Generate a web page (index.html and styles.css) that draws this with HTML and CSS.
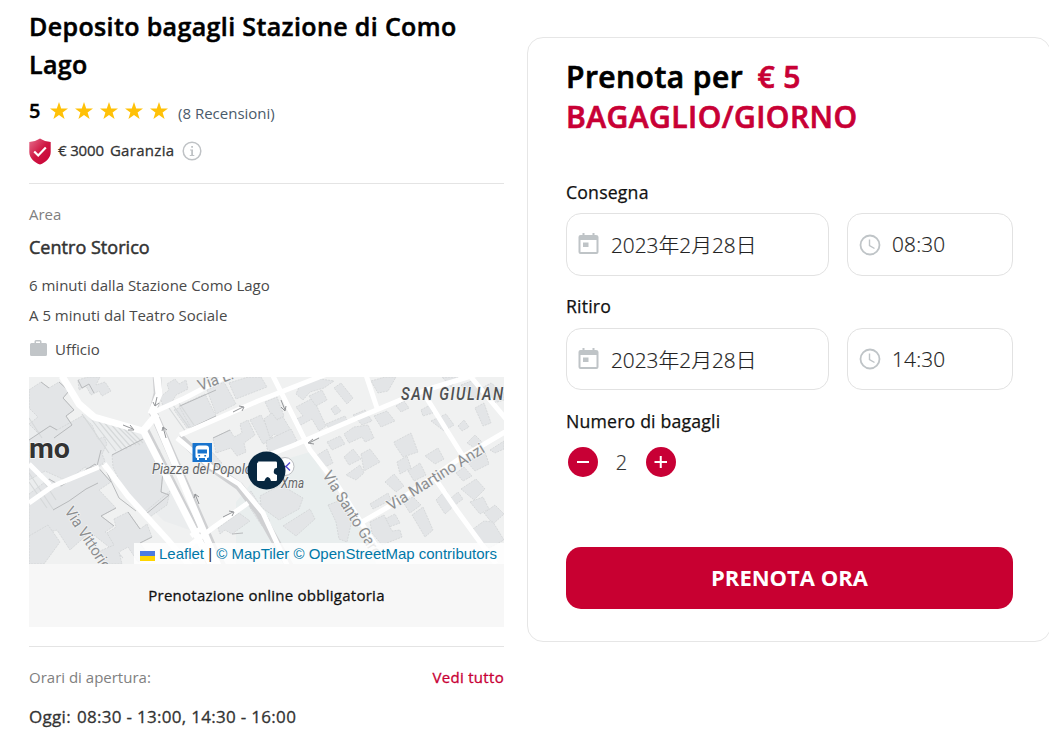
FILE: index.html
```
<!DOCTYPE html>
<html lang="it">
<head>
<meta charset="utf-8">
<title>Deposito bagagli Stazione di Como Lago</title>
<link rel="stylesheet" href="styles.css">
</head>
<body>
<svg class="defs" width="0" height="0" aria-hidden="true">
  <symbol id="star" viewBox="0 0 18 18"><path d="M9 0l2.200 6.400H18l-5.400 4.100 2 6.500L9 13.100 3.400 17l2-6.500L0 6.400h6.800z"/></symbol>
  <symbol id="calendar" viewBox="0 0 20 22"><path fill-rule="evenodd" d="M4 0h2v2h8V0h2v2h1.500A2.500 2 0 0 1 20 4v15a2 2 0 0 1-2 2H2a2 2 0 0 1-2-2V4a2 2 0 0 1 2-2h2zM2 7v12h16V7z"/><path d="M4.500 9.500H10V14H4.500z"/></symbol>
  <symbol id="clock" viewBox="0 0 22 22"><circle cx="11" cy="11" r="9.500" fill="none" stroke="currentColor" stroke-width="1.800"/><path d="M10.500 5.500v6l5 3" fill="none" stroke="currentColor" stroke-width="1.400"/></symbol>
</svg>
<main class="page">
  <section class="info">
    <h1 class="title">Deposito bagagli Stazione di Como Lago</h1>
    <div class="rating">
      <strong class="score">5</strong>
      <span class="stars">
        <svg><use href="#star"/></svg><svg><use href="#star"/></svg><svg><use href="#star"/></svg><svg><use href="#star"/></svg><svg><use href="#star"/></svg>
      </span>
      <span class="reviews">(8 Recensioni)</span>
    </div>
    <div class="guarantee">
      <svg class="shield" viewBox="0 0 22 27">
        <defs><linearGradient id="sg" x1="0" y1="0" x2="1" y2="1"><stop offset="0" stop-color="#e56d8c"/><stop offset=".5" stop-color="#cf1743"/><stop offset="1" stop-color="#c80035"/></linearGradient></defs>
        <path d="M11 .5C14 2.500 18 3.700 21.700 4v10c0 6-5 10.500-10.700 12.500C5.300 24.500.3 20 .3 14V4C4 3.700 8 2.500 11 .5z" fill="url(#sg)"/>
        <path d="M5.200 13.500l4 4 7.600-8" fill="none" stroke="#fff" stroke-width="2.200"/>
      </svg>
      <span class="amount">€ 3000</span>
      <span class="g-label">Garanzia</span>
      <svg class="i-icon" viewBox="0 0 20 20"><circle cx="10" cy="10" r="8.800" fill="none" stroke="#bfc2c5" stroke-width="1.500"/><path d="M9.200 5h1.800v1.800H9.200zM8 8.500h3V14h1.300v1H7.800v-1h1.400V9.500H8z" fill="#bfc2c5"/></svg>
    </div>
    <div class="area">
      <div class="muted">Area</div>
      <div class="area-name">Centro Storico</div>
      <div class="line">6 minuti dalla Stazione Como Lago</div>
      <div class="line">A 5 minuti dal Teatro Sociale</div>
      <div class="kind"><svg viewBox="0 0 18 17"><path fill-rule="evenodd" d="M5 3V1.500A1.500 1.500 0 0 1 6.500 0h4A1.500 1.500 0 0 1 12 1.500V3h4a1.500 1.500 0 0 1 1.500 1.500v10A1.500 1.500 0 0 1 16 16H2A1.500 1.500 0 0 1 .5 14.500v-10A1.500 1.500 0 0 1 2 3zM6.500 1.500V3h4V1.500z" fill="#c1c5c8"/></svg><span>Ufficio</span></div>
    </div>
    <div class="map">
      <svg class="map-art" viewBox="29 377 475 187">
        <rect x="29" y="377" width="475" height="187" fill="#f0f1f1"/>
        <path class="park" d="M236 502l30-37 44-13 28 45 30 42 8 25H236z"/>
        <path class="pave" d="M29 408l30 27 27-22 64 20 48 100-34-12-58-56-80 33z"/>
        <g class="bld">
          <path d="M29 390l12-8 8 6 10-6 10 9-6 7 11 12-8 6 6 9-18 13-4-5-7 5-14-14 9-7-9-9z"/>
          <path d="M29 440l21-14 7 4 25-14 10 9 6 14 6-2 3 7-5 10 3 7-11 10-9-4-18 14-22-10-16 9z"/>
          <path d="M112 455l31-16 17 11-6 13 9 8-2 21 8 3-23 19-17-13-16-34z"/>
          <path d="M146 511l24-20-3 14-20 14z"/>
          <path d="M29 494l20-15 12 7 34-22 16 18-12 8 17 18-15 8 13 10-9 6 21 7-10 10 7 9-33-26-20 18-13-20-28 8z"/>
          <path d="M29 536l19-11 12 17-16 22H29z"/>
          <path d="M78 380l10-3h12l-4 8 9-3 6 9-9 5-3-5-8 4-5-9-7 4z"/>
          <path d="M114 519l14-7 12 17 7-5 5 13-12 6 9 13-11 6-10-15-9 5 3 12h-17l-5-13 14-6-7-12 9-6z"/>
          <path d="M160 397l9-7-2-6 8-5 4 5 7-4 2 9-12 6-5 9-8 2z"/>
          <path d="M174 410l17-8 10 21-14 5z"/>
          <path d="M179 406l26-12 11 22-25 12z"/>
          <path d="M207 390l17-8 12 22-20 10z"/>
          <path d="M229 383l19-6h13l6 10-31 12z"/>
          <path d="M213 438l17-8 4 7 8-4-2-9 8-4 7 15-11 8 2 9-9 4-6-8-15 5z"/>
          <path d="M250 420l11-5 12 24-10 5z"/><path d="M265 402l12-5 7 19-10 5z"/>
          <path d="M203 457l9-5 10 11-9 7z"/>
          <path d="M218 528l21-15 11 8-18 13-7-4-5 4z"/>
          <path d="M243 497l8-6 19 30-8 5z"/><path d="M260 496l21-11 22 13-4 11-20 11-18-13z"/>
          <path d="M283 526l27-17 5 10-19 17z"/><path d="M328 505l13-5 11 20-5 22-8-3-3-17z"/>
          <path d="M264 419l8-6 5 7 6-3 9 15-11 7-7-5-4 4z"/><path d="M266 441l25-12 6 12-21 13-9-5z"/>
          <path d="M294 420l9-4-7-9 17-9 13 28-7 5-7-12-11 6z"/><path d="M300 385l14-7 20 3-10 7-14 4-7 8-7-6z"/>
          <path d="M309 396l13-6 5 10-11 6z"/><path d="M331 409l5-4 5 6-6 4z"/><path d="M326 424l19-8 3 6-18 8z"/>
          <path d="M316 456l11-7 6 14-8 4z"/><path d="M327 442l13-6 5 8-13 6z"/><path d="M344 434l10-7 14-2 6 13-9 4-3-5-13 6z"/>
          <path d="M344 457l9-8 8 10-12 6z"/><path d="M361 454l9-5 10 13-16 9z"/><path d="M353 415l12-5 7 11-10 4z"/>
          <path d="M374 416l13-5 8 10-14 6z"/><path d="M394 442l17-9 7 19-15 5-8-12z"/>
          <path d="M397 462l10-6 4 12-11 6z"/><path d="M408 471l12-8 6 12-12 6z"/><path d="M425 456l13-8 6 11-9 5z"/>
          <path d="M421 410l9-5 3 8-10 3z"/><path d="M431 421l15-7 8 11-10 6z"/><path d="M458 426l6-6 5 7-7 4z"/>
          <path d="M467 443l8-8 8 8-7 6z"/><path d="M490 450l14-9v8l-9 4z"/><path d="M467 462l18-10 4 12-14 7z"/>
          <path d="M456 473l8-6 8 9-9 5z"/><path d="M461 489l15-10 9 10-11 11z"/><path d="M436 500l10-10 8 16-9 8z"/>
          <path d="M451 498l7-6 5 7-8 6z"/><path d="M470 502l13-5 6 12-9 5z"/><path d="M484 513l11-8 9 9-11 10z"/>
          <path d="M473 529l11-8 9 1 11 18-15 8-12-11z"/><path d="M423 507l10 23-8 7-13-22z"/>
          <path d="M385 519l10-5 5 9-11 4z"/><path d="M370 522l14-7 8 16 8-1 2 7-20 8-10-12z"/><path d="M403 502l10-5 8 8-11 8z"/>
          <path d="M385 482l9-8 10 12-8 6z"/><path d="M370 504l18-11 3 7-18 9z"/><path d="M346 475l14-10 4 8-8 7z"/>
          <path d="M334 388l7-5 12 15-6 6z"/><path d="M371 381l14-4h11l-8 14-10 2z"/><path d="M396 406l8-5 5 7-8 4z"/>
          <path d="M442 377h16l-7 10z"/><path d="M461 385l13-5 8 13-9 6z"/><path d="M475 408l9-5 7 20-8 3z"/><path d="M482 388l9-5 13 10v7l-10 3z"/>
        </g>
        <g class="hatch">
          <path d="M82 414l27 39M88 415l28 36M95 417l27 33M102 420l25 29M109 422l22 25M116 425l20 20M122 427l18 18M129 429l14 14M169 408l17 24M173 405l17 24M179 403l15 22"/>
          <path d="M29 473l24 36M29 482l18 26M36 470l20 30M29 418l13 20"/>
        </g>
        <g class="edge">
          <path d="M41 382l8 6M59 382l10 9-6 7 11 12-8 6 6 9-18 13M29 440l21-14 7 4M101 450l-4 16-11 3M112 455l31-16M136 511l-17-13-16-34M163 471l-2 21 8 3-23 19M95 464l16 18M49 479l12 7 34-22M116 508l-15 8 13 10M180 406l36-16M191 428l25-12M213 438l17-8M243 533l-11 1M128 512l12 17M152 537l-12 6M53 510l16-9 17-12 12-6M78 380l4 8 7-4 5 9"/>
        </g>
        <g class="case">
          <path d="M153 412L214 551l8 15M145 430l53 105 14 32M157 377l1 16-5 20M179 437l31 29 29 20 20 26 31 55"/>
        </g>
        <g class="road">
          <path class="w7" d="M62 376l17 28 15 13 49 14 14-17M157 376l2 18-8 20"/>
          <path class="w7" d="M153 412L219 568M143 430l55 108 14 28"/>
          <path class="w6" d="M104 464l24 32 39 43 24 28"/>
          <path d="M154 412l31-14 46-24M180 435l78-34 69-27M177 438l33 28 29 18 24 29 25 54"/>
          <path d="M176 556l38-29 34-24M191 536l13-10M272 374l38 76 28 36 38 60M255 460l37-14 63-27 50-21 27-10 46-14"/>
          <path d="M366 375l12 36M426 397l38 61M470 376l36 43M357 525l38-22 64-44 46-27M434 477l24 35 38 52M29 503l24-17 46-19M50 485l-21-21"/>
        </g>
        <g class="arrows">
          <path d="M123 425l10 4m-3-4l4 5-6 0M166 438l-3-11m-1 4l1-4 4 3M199 504l-4-10m-1 4l1-4 4 3M157 397l-2 9m-2-4l2 4 4-3M233 412l10-5m-4-1l5 1-2 4M223 517l10-5m-4-1l5 1-2 4M281 400l4 10m-4-3l4 4 1-5M319 438l-10 5m4-4l-5 4 6 1"/>
        </g>
        <g class="street">
          <text transform="translate(200 391) rotate(-20)" textLength="37" lengthAdjust="spacingAndGlyphs">Via L.</text>
          <text transform="translate(64 511) rotate(57)" textLength="72" lengthAdjust="spacingAndGlyphs">Via Vittorio</text>
          <text transform="translate(322 475) rotate(58)" textLength="98" lengthAdjust="spacingAndGlyphs">Via Santo Garo</text>
          <text transform="translate(391 511) rotate(-32)" textLength="112" lengthAdjust="spacingAndGlyphs">Via Martino Anzi</text>
        </g>
        <text class="city" x="29" y="458" textLength="41" lengthAdjust="spacingAndGlyphs">mo</text>
        <text class="district" transform="translate(401 400) scale(.82 1)">SAN GIULIAN</text>
        <text class="place" x="152" y="474" textLength="100" lengthAdjust="spacingAndGlyphs">Piazza del Popolo</text>
        <text class="place" x="281" y="488" textLength="23" lengthAdjust="spacingAndGlyphs">Xma</text>
        <g>
          <rect x="192.500" y="443" width="19.500" height="19" fill="#1873cd"/>
          <path fill="#fff" fill-rule="evenodd" d="M199 445.500h7q3 0 3 3v8q0 1.500-2 1.500v2h-2v-2h-6v2h-2v-2q-1.500 0-1.500-1.500v-8q0-3 3.500-3zm-1.500 4v4h9.500v-4zM198.300 455h1.800v1.500h-1.800zm6 0h1.800v1.500h-1.800z"/>
        </g>
        <circle cx="285" cy="466.500" r="9" fill="#fff" stroke="#bcbec2"/>
        <path d="M290 462.500l-4 4 4 4M283 466.500h3" stroke="#5147cf" stroke-width="1.400" fill="none"/>
        <circle cx="266.500" cy="470.500" r="19" fill="#072740"/>
        <path d="M258.200 461.500h17.600q1.200 0 1.200 1.200v5l-2.500 1q-1.500 3.800 0 5l2.500 1.300v5q0 1-1.200 1H271l-1-2.500q-2.500-3-4.500 0l-1.200 2.500h-6.100q-1.200 0-1.200-1.200v-16.100q0-1.200 1.200-1.200z" fill="#fff"/>
      </svg>
      <div class="credit"><svg class="flag" viewBox="0 0 15 10"><path fill="#4c7be1" d="M0 0h15v5H0z"/><path fill="#ffd500" d="M0 5h15v5H0z"/></svg><a>Leaflet</a> | <a>© MapTiler</a> <a>© OpenStreetMap contributors</a></div>
    </div>
    <div class="notice">Prenotazione online obbligatoria</div>
    <div class="hours">
      <div class="hours-head"><span class="muted">Orari di apertura:</span><a class="all">Vedi tutto</a></div>
      <div class="today"><span>Oggi:</span><span>08:30 - 13:00, 14:30 - 16:00</span></div>
    </div>
  </section>
  <section class="card">
    <h2 class="price"><span class="for">Prenota per</span> <span class="red">€ 5</span><br><span class="red">BAGAGLIO/GIORNO</span></h2>
    <div class="label">Consegna</div>
    <div class="fields first">
      <div class="field"><svg class="cal"><use href="#calendar"/></svg><span class="date">2023年2月28日</span></div>
      <div class="field"><svg class="clk"><use href="#clock"/></svg><span class="time">08:30</span></div>
    </div>
    <div class="label pickup">Ritiro</div>
    <div class="fields second">
      <div class="field"><svg class="cal"><use href="#calendar"/></svg><span class="date">2023年2月28日</span></div>
      <div class="field"><svg class="clk"><use href="#clock"/></svg><span class="time">14:30</span></div>
    </div>
    <div class="label">Numero di bagagli</div>
    <div class="stepper">
      <button class="round"><svg viewBox="0 0 30 30"><path d="M9 15h12"/></svg></button>
      <span class="count">2</span>
      <button class="round"><svg viewBox="0 0 30 30"><path d="M8.500 15h12.500M14.750 9v12"/></svg></button>
    </div>
    <button class="book">PRENOTA ORA</button>
  </section>
</main>
</body>
</html>
```
FILE: styles.css
```
* { box-sizing: border-box; }
body { margin: 0; width: 1049px; height: 746px; overflow: hidden; background: #fff; font-family: "Open Sans", "Noto Sans CJK JP", sans-serif; color: #333; }
button { border: 0; padding: 0; font-family: inherit; }
svg { display: block; }
.defs { position: absolute; }
.page { display: flex; align-items: flex-start; gap: 23px; padding-left: 29px; width: 1060px; }
.info { width: 475px; flex: none; }
.title { margin: 0; padding-top: 7px; height: 92px; font-size: 25px; line-height: 38px; font-weight: 600; color: #000; letter-spacing: .37px; -webkit-text-stroke: .5px; }
.rating { display: flex; align-items: center; height: 38px; }
.score { width: 21px; font-size: 20px; line-height: 26px; font-weight: 600; color: #000; -webkit-text-stroke: .3px; }
.stars { display: flex; gap: 7px; fill: #ffc107; }
.stars svg { width: 18px; height: 18px; }
.reviews { margin-left: 10px; padding-top: 4px; font-size: 15px; color: #4a5a6a; }
.guarantee { display: flex; align-items: center; height: 54px; padding-bottom: 11px; border-bottom: 1px solid #e4e4e4; font-size: 15px; line-height: 20px; -webkit-text-stroke: .3px; }
.guarantee span { padding-bottom: 2px; }
.shield { width: 22px; height: 27px; margin: 0 7px 0 0; }
.amount { letter-spacing: -.15px; }
.g-label { margin-left: 6px; letter-spacing: .3px; }
.i-icon { width: 20px; height: 20px; margin-left: 8px; -webkit-text-stroke: 0; }
.area { height: 193px; padding-top: 18px; }
.muted { font-size: 15px; line-height: 24px; color: #808080; }
.area-name { margin: 8px 0 10px; font-size: 18px; line-height: 26px; color: #333; letter-spacing: .03px; -webkit-text-stroke: .5px; }
.line { font-size: 15px; line-height: 30px; color: #4a4a4a; }
.kind { display: flex; align-items: center; gap: 7px; height: 37px; font-size: 15px; color: #4a4a4a; }
.kind svg { width: 19px; height: 17px; }
.map { position: relative; height: 187px; overflow: hidden; }
.map-art { width: 475px; height: 187px; }
.park { fill: #e9eeee; }
.pave { fill: #ebedee; }
.bld path { fill: #e3e5e7; stroke: #ced1d3; stroke-width: .7; stroke-dasharray: 2 1; }
.hatch { stroke: #d6d9da; stroke-width: 1.200; }
.edge { stroke: #b8babc; stroke-width: 1; fill: none; }
.case { fill: none; stroke: #cfd0d2; stroke-width: 8.500; }
.road { fill: none; stroke: #fff; stroke-width: 5; stroke-linejoin: round; }
.road .w7 { stroke-width: 7; }
.road .w6 { stroke-width: 6; }
.arrows { stroke: #939598; stroke-width: 1; fill: none; }
.street, .place, .district, .city { font-family: Roboto, sans-serif; paint-order: stroke; stroke: #f3f4f4; stroke-width: 1.500px; }
.street { font-size: 15.500px; fill: #8c8e90; }
.place { font-size: 15px; font-style: italic; fill: #636567; }
.district { font-size: 18px; font-style: italic; font-weight: 500; letter-spacing: 1.900px; fill: #4e5052; }
.city { font-size: 28px; font-weight: 700; fill: #333; }
.credit { position: absolute; right: 0; bottom: 0; width: 370px; height: 21px; padding-left: 6px; background: rgba(255,255,255,.82); font: 15px/21px "Liberation Sans", sans-serif; white-space: nowrap; color: #333; }
.credit a { color: #0078a8; }
.flag { display: inline-block; width: 15px; height: 10px; margin-right: 4px; vertical-align: -2px; }
.notice { height: 63px; background: #f7f7f7; text-align: center; font-size: 15px; line-height: 63px; letter-spacing: .26px; color: #111; -webkit-text-stroke: .3px; }
.hours { margin-top: 19px; border-top: 1px solid #e4e4e4; padding-top: 18px; }
.hours-head { display: flex; justify-content: space-between; }
.all { font-size: 15px; line-height: 24px; letter-spacing: .3px; color: #c80035; -webkit-text-stroke: .3px; }
.today { display: flex; gap: 6px; margin-top: 15px; font-size: 17px; line-height: 26px; letter-spacing: .3px; -webkit-text-stroke: .3px; }
.card { flex: none; width: 524px; height: 605px; margin-top: 37px; border: 1px solid #e6e6e6; border-radius: 16px; padding: 19px 37px 0 38px; }
.price { margin: 0; height: 122px; font-size: 30px; line-height: 40px; font-weight: 600; color: #000; letter-spacing: .47px; -webkit-text-stroke: .7px; }
.red { color: #c80035; }
.price .for { margin-right: 6px; }
.label { font-size: 17.700px; line-height: 26px; letter-spacing: .17px; color: #111; -webkit-text-stroke: .25px; }
.pickup { margin-top: -1px; }
.fields { display: grid; grid-template-columns: 263px 166px; gap: 18px; }
.first { height: 81px; margin-top: 8px; padding-bottom: 18px; }
.second { height: 80px; margin-top: 9px; padding-bottom: 18px; }
.field { display: flex; align-items: center; border: 1px solid #e2e2e2; border-radius: 15px; padding-left: 11px; font-size: 20.800px; font-weight: 300; color: #222; -webkit-text-stroke: .2px; }
.field span { padding-bottom: 1px; }
.field svg { color: #bfc4c7; fill: currentColor; flex: none; -webkit-text-stroke: 0; }
.cal { width: 21px; height: 22px; margin-bottom: 1px; }
.clk { width: 22px; height: 22px; }
.date { margin-left: 12px; }
.time { margin-left: 11px; letter-spacing: .2px; }
.stepper { display: flex; align-items: center; margin-top: 13px; padding-left: 2px; }
.round { width: 30px; height: 30px; border-radius: 50%; background: #c80035; }
.round path { stroke: #fff; stroke-width: 2; }
.count { width: 47px; margin-right: 1px; padding-top: 2px; text-align: center; font-size: 20px; line-height: 28px; font-weight: 300; -webkit-text-stroke: .2px; }
.book { display: block; width: 447px; height: 62px; margin-top: 70px; padding-bottom: 2px; border-radius: 15px; background: #c80031; color: #fff; font-size: 22px; font-weight: 700; }
```
